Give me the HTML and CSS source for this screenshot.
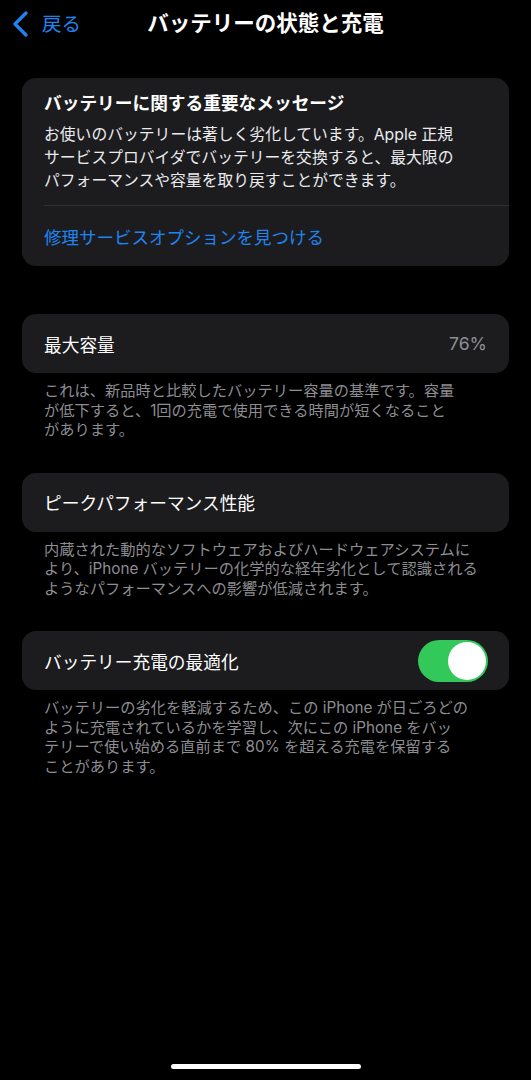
FILE: index.html
```html
<!DOCTYPE html>
<html lang="ja">
<head>
<meta charset="utf-8">
<title>バッテリーの状態と充電</title>
<link rel="stylesheet" href="styles.css">
</head>
<body>
<div class="screen">
  <header class="nav">
    <div class="back">
      <svg class="chev" width="18" height="26" viewBox="0 0 18 26"><path d="M15 2 L4 13 L15 24" fill="none" stroke="#1f84f0" stroke-width="3.2" stroke-linecap="round" stroke-linejoin="round"/></svg>
      <span class="back-label">戻る</span>
    </div>
    <h1 class="title">バッテリーの状態と充電</h1>
  </header>

  <section class="card msg">
    <div class="msg-body">
      <h2 class="msg-title">バッテリーに関する重要なメッセージ</h2>
      <p class="msg-text">お使いのバッテリーは著しく劣化しています。Apple 正規<br>サービスプロバイダでバッテリーを交換すると、最大限の<br>パフォーマンスや容量を取り戻すことができます。</p>
    </div>
    <div class="sep"></div>
    <div class="link-row">修理サービスオプションを見つける</div>
  </section>

  <section class="card row">
    <span class="label">最大容量</span>
    <span class="value">76%</span>
  </section>
  <p class="footer">これは、新品時と比較したバッテリー容量の基準です。容量<br>が低下すると、1回の充電で使用できる時間が短くなること<br>があります。</p>

  <section class="card row">
    <span class="label">ピークパフォーマンス性能</span>
  </section>
  <p class="footer">内蔵された動的なソフトウェアおよびハードウェアシステムに<br>より、iPhone バッテリーの化学的な経年劣化として認識される<br>ようなパフォーマンスへの影響が低減されます。</p>

  <section class="card row">
    <span class="label">バッテリー充電の最適化</span>
    <span class="toggle"><span class="knob"></span></span>
  </section>
  <p class="footer">バッテリーの劣化を軽減するため、この iPhone が日ごろどの<br>ように充電されているかを学習し、次にこの iPhone をバッ<br>テリーで使い始める直前まで 80% を超える充電を保留する<br>ことがあります。</p>

  <div class="spacer"></div>
  <div class="home"></div>
</div>
</body>
</html>
```

FILE: styles.css
```css
* { box-sizing: border-box; margin: 0; padding: 0; }
html, body { background: #000; }
body {
  font-family: "Inter", "Noto Sans CJK JP", sans-serif;
  color: #fff;
  width: 531px;
  height: 1080px;
  overflow: hidden;
}
.screen {
  display: flex;
  flex-direction: column;
  height: 1080px;
}
.nav {
  position: relative;
  height: 48px;
  display: flex;
  align-items: center;
  justify-content: center;
}
.back {
  position: absolute;
  left: 11px;
  top: 11px;
  display: flex;
  align-items: center;
  gap: 13px;
}
.chev { display: block; }
.back-label {
  color: #1f84f0;
  font-size: 19.5px;
  line-height: 26px;
}
.title {
  font-size: 21.5px;
  font-weight: 700;
  line-height: 28px;
  margin-top: -2px;
}
.card {
  background: #1c1c1e;
  border-radius: 14px;
  margin: 0 22px;
}
.msg { margin-top: 30px; }
.msg-body { padding: 14px 22px 13px; }
.msg-title {
  font-size: 17.7px;
  font-weight: 700;
  line-height: 24px;
  margin-bottom: 7px;
}
.msg-text {
  font-size: 15.8px;
  line-height: 23px;
  color: #ebebf0;
}
.sep {
  height: 1px;
  background: #2f2f32;
  margin-left: 22px;
}
.link-row {
  height: 60px;
  display: flex;
  align-items: center;
  padding: 0 22px;
  font-size: 17.5px;
  color: #1f84f0;
}
.row {
  height: 59px;
  display: flex;
  align-items: center;
  justify-content: space-between;
  padding: 0 22px;
  margin-top: 48px;
}
.row + .footer + .row { margin-top: 0; }
.label {
  font-size: 17.7px;
  color: #fff;
}
.value {
  font-size: 17.7px;
  color: #8e8e93;
}
.footer {
  padding: 8px 44px 0;
  font-size: 15.25px;
  line-height: 19.5px;
  color: #8d8d92;
  margin-bottom: 33px;
}
.toggle {
  position: relative;
  width: 70px;
  height: 42px;
  border-radius: 21px;
  background: #32c85a;
  margin-right: -1px;
}
.knob {
  position: absolute;
  right: 2px;
  top: 2px;
  width: 38px;
  height: 38px;
  border-radius: 50%;
  background: #fff;
}
.spacer { flex: 1; }
.home {
  width: 190px;
  height: 5px;
  border-radius: 3px;
  background: #fff;
  align-self: center;
  margin-bottom: 11px;
}
```
